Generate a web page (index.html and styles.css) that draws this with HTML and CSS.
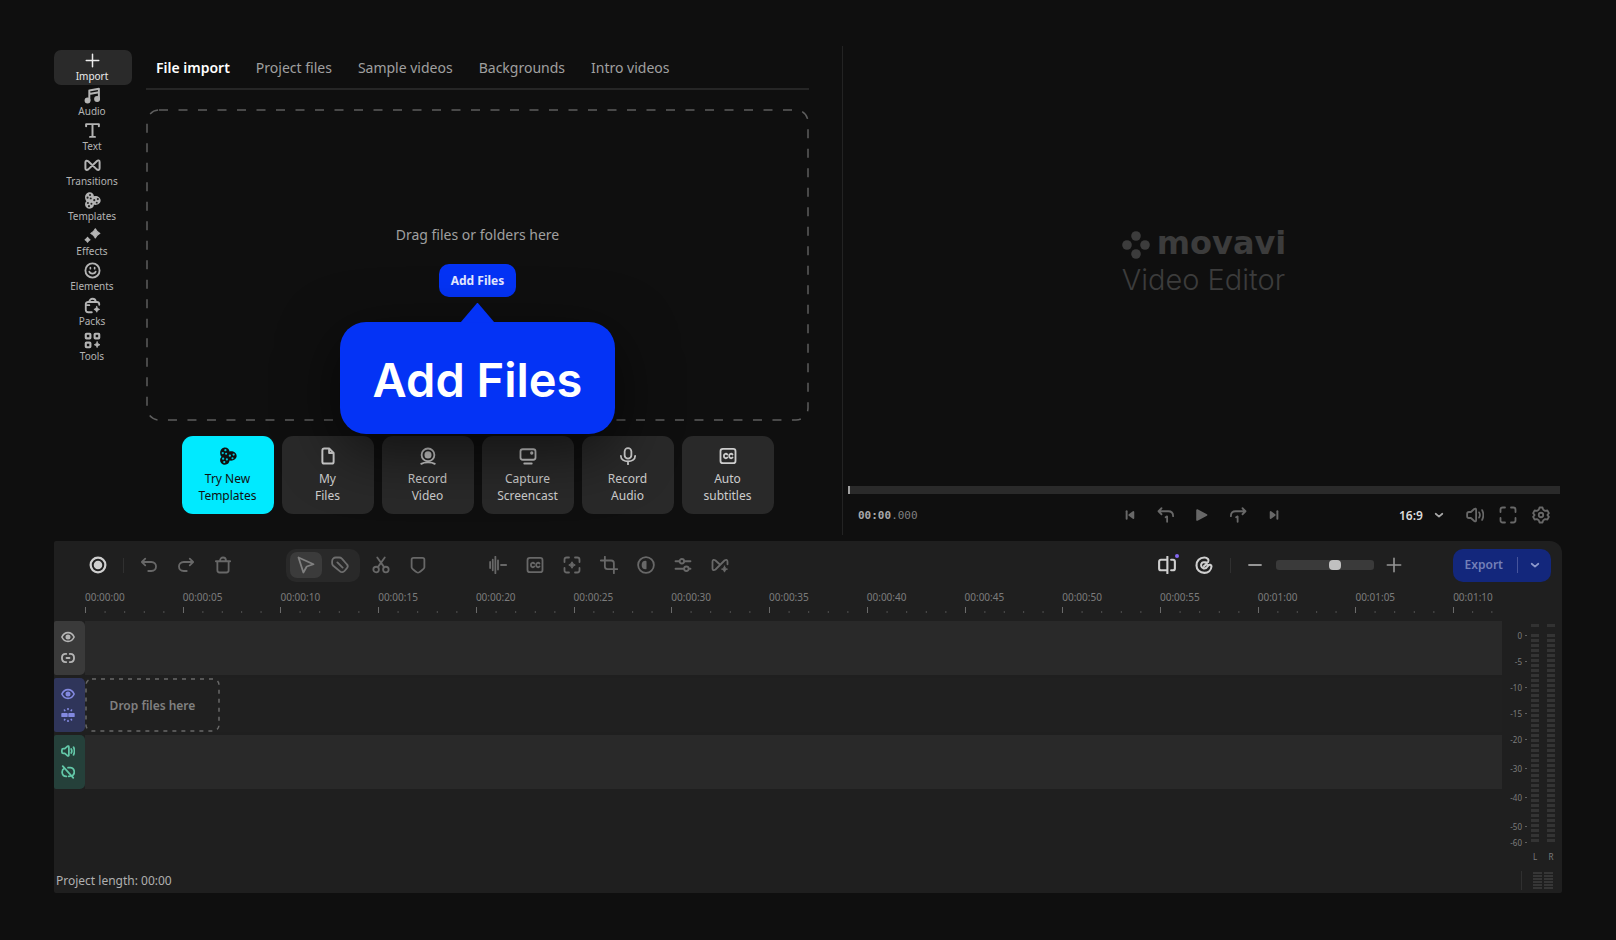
FILE: index.html
```html
<!DOCTYPE html>
<html lang="en">
<head>
<meta charset="utf-8">
<meta name="viewport" content="width=device-width, initial-scale=1">
<title>Movavi Video Editor</title>
<link rel="stylesheet" href="styles.css">
</head>
<body>
<svg class="sprite" aria-hidden="true">
  <symbol id="i-plus" viewBox="0 0 24 24"><path d="M12 2v20M2 12h20"/></symbol>
  <symbol id="i-minus" viewBox="0 0 24 24"><path d="M4 12h16"/></symbol>
  <symbol id="i-music" viewBox="0 0 24 24"><path d="M7.500 19V5L21 2.500V17M7.500 10L21 7.500" stroke-width="2.800"/><circle cx="5" cy="19" r="3" fill="currentColor"/><circle cx="18.500" cy="17" r="3" fill="currentColor"/></symbol>
  <symbol id="i-text" viewBox="0 0 24 24"><path d="M3 6V3h18v3M12 3v18M8.500 21h7" stroke-width="2.800"/></symbol>
  <symbol id="i-bow" viewBox="0 0 24 24"><path d="M2 7.500C2 5 4 4.500 6 6l12 11.500c2 1.500 4 1 4-1.500v-9c0-2.500-2-3-4-1L6 17.500c-2 1.500-4 1-4-1.500z" stroke-width="2.800"/></symbol>
  <symbol id="i-reel" viewBox="0 0 24 24"><path fill="currentColor" stroke="none" fill-rule="evenodd" d="M8 .500c3.500 0 6 2.500 6 5.500C19 5 23.500 8 23.500 12s-4.500 7-9.500 6c0 3-2.500 5.500-6 5.500S1.500 21 1.500 17.500c0-2 .800-3.500 2-4.500-1.200-1-2-3-2-5.500C1.500 3.500 4.500.500 8 .500z"/><g class="cut"><circle cx="8.500" cy="4.200" r="1.500"/><circle cx="5" cy="8" r="1.500"/><circle cx="9.500" cy="9" r="1.400"/><circle cx="19.500" cy="10" r="1.500"/><circle cx="14.500" cy="11.500" r="1.500"/><circle cx="18" cy="15" r="1.400"/><circle cx="5.500" cy="15.500" r="1.500"/><circle cx="10.500" cy="16.500" r="1.400"/><circle cx="7" cy="20" r="1.500"/></g></symbol>
  <symbol id="i-spark" viewBox="0 0 24 24"><path fill="currentColor" d="M16 2.500c1.500 3.500 2.500 4.500 6.500 6.500-4 2-5 3-6.500 6.500-1.500-3.500-2.500-4.500-6.500-6.500 4-2 5-3 6.500-6.500zM5 14.500c1 2 1.500 2.500 3.500 3.500-2 1-2.500 1.500-3.500 3.500-1-2-1.500-2.500-3.500-3.500 2-1 2.500-1.500 3.500-3.500z" stroke-width="1.500"/></symbol>
  <symbol id="i-smile" viewBox="0 0 24 24"><circle cx="12" cy="12" r="10" stroke-width="2.600"/><path d="M7.500 13.500c1 4 8 4 9 0M9 8v1.500M15 8v1.500" stroke-width="2.400"/></symbol>
  <symbol id="i-pack" viewBox="0 0 24 24"><path d="M11 21.500H6c-2 0-3.500-1-3.500-3V10c0-2 1.500-3 3.500-3h12c2 0 3.500 1 3.500 3v1M7.500 7c0-6 9-6 9 0M2.500 11.500h5" stroke-width="2.600"/><path fill="currentColor" d="M18 13.500c1 2.500 1.500 3 4 4-2.500 1-3 1.500-4 4-1-2.500-1.500-3-4-4 2.500-1 3-1.500 4-4z" stroke-width="1.200"/></symbol>
  <symbol id="i-tools" viewBox="0 0 24 24"><g stroke-width="3"><rect x="2.500" y="2.500" width="6.500" height="6.500" rx="1"/><rect x="15" y="2.500" width="6.500" height="6.500" rx="1"/><rect x="2.500" y="15" width="6.500" height="6.500" rx="1"/></g><path fill="currentColor" d="M18.500 14c1 2.500 1.500 3 4 4-2.500 1-3 1.500-4 4-1-2.500-1.500-3-4-4 2.500-1 3-1.500 4-4z" stroke-width="1.200"/></symbol>
  <symbol id="i-file" viewBox="0 0 24 24"><path d="M13.500 2H7C5.300 2 4.500 3 4.500 4.500v15C4.500 21 5.300 22 7 22h10c1.700 0 2.500-1 2.500-2.500V8zM13.500 2v6h6" stroke-width="2.600"/></symbol>
  <symbol id="i-webcam" viewBox="0 0 24 24"><circle cx="12" cy="10.500" r="8.500"/><circle cx="12" cy="10.500" r="3.500" fill="currentColor"/><path d="M3 22.500c4-2.500 14-2.500 18 0"/></symbol>
  <symbol id="i-screen" viewBox="0 0 24 24"><rect x="2" y="3" width="20" height="14" rx="3"/><path d="M7 22h10"/><circle cx="17" cy="8" r="1" fill="currentColor"/></symbol>
  <symbol id="i-mic" viewBox="0 0 24 24"><rect x="7.500" y="1.500" width="9" height="14" rx="4.500"/><path d="M2.500 12c0 9.500 19 9.500 19 0M12 19v4"/></symbol>
  <symbol id="i-cc" viewBox="0 0 24 24"><rect x="2" y="2.500" width="20" height="19" rx="3"/><path d="M11 10c-1-1.500-4.500-1.500-4.500 2s3.500 3.500 4.500 2M18 10c-1-1.500-4.500-1.500-4.500 2s3.500 3.500 4.500 2"/></symbol>
  <symbol id="i-prev" viewBox="0 0 24 24"><path d="M7.500 7v10" stroke-width="2.600"/><path fill="currentColor" d="M16.500 8v8L11 12z"/></symbol>
  <symbol id="i-next" viewBox="0 0 24 24"><path d="M16.500 7v10" stroke-width="2.600"/><path fill="currentColor" d="M7.500 8v8l5.500-4z"/></symbol>
  <symbol id="i-play" viewBox="0 0 24 24"><path fill="currentColor" d="M5.500 5.500v13L18 12z"/></symbol>
  <symbol id="i-back1" viewBox="0 0 24 24"><path d="M6 3L2 7l4 4M2.500 7H15c5 0 6.500 2.500 6.500 6.500M11.500 15l2-1.200V21"/></symbol>
  <symbol id="i-fwd1" viewBox="0 0 24 24"><path d="M18 3l4 4-4 4M21.500 7H9c-5 0-6.500 2.500-6.500 6.500M9.500 15l2-1.200V21"/></symbol>
  <symbol id="i-chev" viewBox="0 0 24 24"><path d="M4 9l8 7 8-7" stroke-width="4"/></symbol>
  <symbol id="i-vol" viewBox="0 0 24 24"><path d="M11 4L6.500 8H4c-1.500 0-2.500 1-2.500 2.500v3C1.500 15 2.500 16 4 16h2.500l4.500 4c1.500 1 2.500.500 2.500-1V5c0-1.500-1-2-2.500-1zM17.500 8.500c1.200 2 1.200 5 0 7M21.500 5.500c2 4 2 9 0 13"/></symbol>
  <symbol id="i-full" viewBox="0 0 24 24"><path d="M2 8V5c0-2 1-3 3-3h3M16 2h3c2 0 3 1 3 3v3M22 16v3c0 2-1 3-3 3h-3M8 22H5c-2 0-3-1-3-3v-3"/></symbol>
  <symbol id="i-gear" viewBox="0 0 24 24"><path d="M10 2h4l1 3 2.500 1.500 3-.500 2 3.500-2 2.500 2 2.500-2 3.500-3-.500L15 19l-1 3h-4l-1-3-2.500-1.500-3 .500-2-3.500 2-2.500-2-2.500 2-3.500 3 .500L9 5z"/><circle cx="12" cy="12" r="3"/></symbol>
  <symbol id="i-rec" viewBox="0 0 24 24"><circle cx="12" cy="12" r="9.800" stroke-width="3"/><circle cx="12" cy="12" r="4.500" fill="currentColor"/></symbol>
  <symbol id="i-undo" viewBox="0 0 24 24"><path d="M7 3.500L2.500 8 7 12.500M3 8h12c8.500 0 8.500 12 0 12h-4"/></symbol>
  <symbol id="i-redo" viewBox="0 0 24 24"><path d="M17 3.500L21.500 8 17 12.500M21 8H9C.500 8 .500 20 9 20h4"/></symbol>
  <symbol id="i-trash" viewBox="0 0 24 24"><path d="M2.500 7h19M4.500 7v12c0 2 1 3 3 3h9c2 0 3-1 3-3V7M8 6.500C8 .500 16 .500 16 6.500"/></symbol>
  <symbol id="i-cursor" viewBox="0 0 24 24"><path d="M2 2l6.500 20 4.500-8 9-3z"/></symbol>
  <symbol id="i-tag" viewBox="0 0 24 24"><path d="M6.500 2H11c1.500 0 2.500.500 3.500 1.500L21 11c1.500 1.500 1.500 4 0 5.500L18 20c-1.500 2-4.500 2-6 .500L3 13c-1-1-1.500-2-1.500-3.500V7c0-3 2-5 5-5zM8.500 8.500l7 7"/></symbol>
  <symbol id="i-cut" viewBox="0 0 24 24"><circle cx="5.500" cy="18" r="3.700"/><circle cx="18.500" cy="18" r="3.700"/><path d="M7.800 14.800L17 2M16.200 14.800L7 2"/></symbol>
  <symbol id="i-shield" viewBox="0 0 24 24"><path d="M6 2.500h12c1.500 0 2.500 1 2.500 2.500v10c0 2-4 4.500-6.500 6.500-1.500 1-2.500 1-4 0-2.500-2-6.500-4.500-6.500-6.500V5c0-1.500 1-2.500 2.500-2.500z"/></symbol>
  <symbol id="i-wave" viewBox="0 0 24 24"><path d="M1.500 8v8M5 5v14M8.500 1v22M12 6v12M16 12h7"/></symbol>
  <symbol id="i-focus" viewBox="0 0 24 24"><path d="M2 8V5c0-2 1-3 3-3h3M16 2h3c2 0 3 1 3 3v3M22 16v3c0 2-1 3-3 3h-3M8 22H5c-2 0-3-1-3-3v-3"/><path fill="currentColor" d="M12 8c1 2.800 1.200 3 4 4-2.800 1-3 1.200-4 4-1-2.800-1.200-3-4-4 2.800-1 3-1.200 4-4z" stroke-width="1.500"/></symbol>
  <symbol id="i-crop" viewBox="0 0 24 24"><path d="M6.500 1v13c0 2.500 1 3.500 3.500 3.500h13M1 6h14c2.500 0 3.500 1 3.500 3.500V23"/></symbol>
  <symbol id="i-contrast" viewBox="0 0 24 24"><circle cx="12" cy="12" r="10.500"/><path fill="currentColor" d="M11.500 7.500c-5.500 0-5.500 9 0 9z"/></symbol>
  <symbol id="i-adjust" viewBox="0 0 24 24"><path d="M2 7h5M14 7h8M2 17h11M20 17h2"/><circle cx="10.500" cy="7" r="3"/><circle cx="16.500" cy="17" r="3"/></symbol>
  <symbol id="i-bowplus" viewBox="0 0 24 24"><path d="M22 11V7.500C22 5 20 4.500 18 6L6 18c-2 1.500-4 1-4-1.500v-9C2 5 4 4.500 6 6l5.500 5"/><path fill="currentColor" d="M18 13.500c1 2.500 1.500 3 4 4-2.500 1-3 1.500-4 4-1-2.500-1.500-3-4-4 2.500-1 3-1.500 4-4z" stroke-width="1.200"/></symbol>
  <symbol id="i-split" viewBox="0 0 24 24"><path d="M8 5H4C2.500 5 1.500 6 1.500 7.500v9C1.500 18 2.500 19 4 19h4M12.500 1v22M8 5h4M8 19h4M17.500 5H20c1.500 0 2.500 1 2.500 2.500v9c0 1.500-1 2.500-2.500 2.500h-2.500" stroke-width="2.800"/></symbol>
  <symbol id="i-magnet" viewBox="0 0 24 24"><path d="M12.500 2C6 2 2 6.500 2 12.500S6.500 22.500 12.500 22.500c5 0 9-3.500 9.500-8.500.200-2.500-3-3-4.500-1-1.500 2.500-3.500 4-6 3.500-3.500-.700-4.500-5-2-7.500 2-2 6 1 8-1 2-2.500-1-6-5-6zM12 13.500l4-3" stroke-width="2.800"/></symbol>
  <symbol id="i-eye" viewBox="0 0 24 24"><path d="M1.500 12C6 2 18 2 22.500 12 18 22 6 22 1.500 12z" stroke-width="2.800"/><circle cx="12" cy="12" r="2.800" fill="currentColor"/></symbol>
  <symbol id="i-link" viewBox="0 0 24 24"><path d="M9 5H8c-8.500 0-8.500 14 0 14h1M15 5h1c8.500 0 8.500 14 0 14h-1M9.500 12h5" stroke-width="3.200"/></symbol>
  <symbol id="i-unlink" viewBox="0 0 24 24"><path d="M6 5.500c-6 3-5.500 14 3 14M12 4.500h4c7 0 8.500 9 4.500 13M3 2l18 20M13 19.500l2.500-.500" stroke-width="3"/></symbol>
  <symbol id="i-burst" viewBox="0 0 24 24"><path fill="currentColor" d="M2 10h8v4H2zM14 10h8v4h-8z"/><path d="M12 1v1.500M12 21.500V23M6 3.500l.5 1M18 3.500l-.5 1M6 20.500l.5-1M18 20.500l-.5-1" stroke-width="2.800"/></symbol>
</svg>

<main class="app">
  <section class="workspace">
    <div class="project">
      <nav class="sidebar" aria-label="Sections">
        <button class="side-item is-active"><svg class="icon"><use href="#i-plus"/></svg>Import</button>
        <button class="side-item"><svg class="icon"><use href="#i-music"/></svg>Audio</button>
        <button class="side-item"><svg class="icon"><use href="#i-text"/></svg>Text</button>
        <button class="side-item"><svg class="icon"><use href="#i-bow"/></svg>Transitions</button>
        <button class="side-item"><svg class="icon"><use href="#i-reel"/></svg>Templates</button>
        <button class="side-item"><svg class="icon"><use href="#i-spark"/></svg>Effects</button>
        <button class="side-item"><svg class="icon"><use href="#i-smile"/></svg>Elements</button>
        <button class="side-item"><svg class="icon"><use href="#i-pack"/></svg>Packs</button>
        <button class="side-item"><svg class="icon"><use href="#i-tools"/></svg>Tools</button>
      </nav>
      <div class="import">
        <div class="tabs">
          <button class="tab is-active">File import</button>
          <button class="tab">Project files</button>
          <button class="tab">Sample videos</button>
          <button class="tab">Backgrounds</button>
          <button class="tab">Intro videos</button>
        </div>
        <div class="dropzone">
          <svg class="outline" aria-hidden="true"><rect class="outline-rect" x="1" y="1" rx="12"/></svg>
          <p class="drop-text">Drag files or folders here</p>
          <div class="add-wrap">
            <button class="add-button">Add Files</button>
            <div class="callout" role="tooltip">Add Files</div>
          </div>
        </div>
        <div class="cards">
          <button class="card is-new"><svg class="icon"><use href="#i-reel"/></svg>Try New<br>Templates</button>
          <button class="card"><svg class="icon"><use href="#i-file"/></svg>My<br>Files</button>
          <button class="card"><svg class="icon"><use href="#i-webcam"/></svg>Record<br>Video</button>
          <button class="card"><svg class="icon"><use href="#i-screen"/></svg>Capture<br>Screencast</button>
          <button class="card"><svg class="icon"><use href="#i-mic"/></svg>Record<br>Audio</button>
          <button class="card"><svg class="icon"><use href="#i-cc"/></svg>Auto<br>subtitles</button>
        </div>
      </div>
    </div>

    <div class="preview">
      <div class="stage">
        <div class="brand">
          <div class="brand-row">
            <svg class="brand-mark" viewBox="0 0 28 28" aria-hidden="true"><circle cx="14" cy="5" r="4.800"/><circle cx="5" cy="14" r="4.800"/><circle cx="23" cy="14" r="4.800"/><circle cx="14" cy="23" r="4.800"/></svg>
            <span class="brand-name">movavi</span>
          </div>
          <div class="brand-product">Video Editor</div>
        </div>
      </div>
      <div class="scrub"><span class="scrub-head"></span></div>
      <div class="player">
        <div class="time">00:00<span class="time-ms">.000</span></div>
        <div class="transport">
          <button class="tool" aria-label="Previous"><svg class="icon"><use href="#i-prev"/></svg></button>
          <button class="tool" aria-label="Frame back"><svg class="icon"><use href="#i-back1"/></svg></button>
          <button class="tool" aria-label="Play"><svg class="icon"><use href="#i-play"/></svg></button>
          <button class="tool" aria-label="Frame forward"><svg class="icon"><use href="#i-fwd1"/></svg></button>
          <button class="tool" aria-label="Next"><svg class="icon"><use href="#i-next"/></svg></button>
        </div>
        <div class="view-tools">
          <label class="ratio"><select class="ratio-select" aria-label="Aspect ratio"><option>16:9</option></select><svg class="icon icon-xs"><use href="#i-chev"/></svg></label>
          <button class="tool tool-view" aria-label="Volume"><svg class="icon"><use href="#i-vol"/></svg></button>
          <button class="tool tool-view" aria-label="Full screen"><svg class="icon"><use href="#i-full"/></svg></button>
          <button class="tool tool-view" aria-label="Settings"><svg class="icon"><use href="#i-gear"/></svg></button>
        </div>
      </div>
    </div>
  </section>

  <section class="timeline">
    <div class="toolbar">
      <button class="tool is-bright" aria-label="Record"><svg class="icon"><use href="#i-rec"/></svg></button>
      <span class="sep"></span>
      <button class="tool" aria-label="Undo"><svg class="icon"><use href="#i-undo"/></svg></button>
      <button class="tool" aria-label="Redo"><svg class="icon"><use href="#i-redo"/></svg></button>
      <button class="tool" aria-label="Delete"><svg class="icon"><use href="#i-trash"/></svg></button>
      <div class="mode">
        <button class="mode-button is-active" aria-label="Select"><svg class="icon"><use href="#i-cursor"/></svg></button>
        <button class="mode-button" aria-label="Slip"><svg class="icon"><use href="#i-tag"/></svg></button>
      </div>
      <button class="tool" aria-label="Split"><svg class="icon"><use href="#i-cut"/></svg></button>
      <button class="tool" aria-label="Marker"><svg class="icon"><use href="#i-shield"/></svg></button>
      <div class="clip-tools">
        <button class="tool" aria-label="Silence removal"><svg class="icon"><use href="#i-wave"/></svg></button>
        <button class="tool" aria-label="Subtitles"><svg class="icon"><use href="#i-cc"/></svg></button>
        <button class="tool" aria-label="Motion tracking"><svg class="icon"><use href="#i-focus"/></svg></button>
        <button class="tool" aria-label="Crop"><svg class="icon"><use href="#i-crop"/></svg></button>
        <button class="tool" aria-label="Color"><svg class="icon"><use href="#i-contrast"/></svg></button>
        <button class="tool" aria-label="Adjust"><svg class="icon"><use href="#i-adjust"/></svg></button>
        <button class="tool" aria-label="Transition wizard"><svg class="icon"><use href="#i-bowplus"/></svg></button>
      </div>
      <div class="zoom-tools">
        <button class="tool is-bright has-dot" aria-label="Auto split"><svg class="icon"><use href="#i-split"/></svg></button>
        <button class="tool is-bright" aria-label="Snap"><svg class="icon"><use href="#i-magnet"/></svg></button>
        <span class="sep"></span>
        <button class="tool is-mid" aria-label="Zoom out"><svg class="icon"><use href="#i-minus"/></svg></button>
        <input class="zoom" type="range" min="0" max="100" value="62" aria-label="Timeline scale">
        <button class="tool is-mid" aria-label="Zoom in"><svg class="icon icon-sm"><use href="#i-plus"/></svg></button>
      </div>
      <div class="export">
        <button class="export-main">Export</button>
        <button class="export-more" aria-label="Export options"><svg class="icon icon-xs"><use href="#i-chev"/></svg></button>
      </div>
    </div>

    <div class="timeline-body">
      <div class="lanes">
        <div class="ruler">
          <span class="mark">00:00:00</span><span class="mark">00:00:05</span><span class="mark">00:00:10</span><span class="mark">00:00:15</span><span class="mark">00:00:20</span><span class="mark">00:00:25</span><span class="mark">00:00:30</span><span class="mark">00:00:35</span><span class="mark">00:00:40</span><span class="mark">00:00:45</span><span class="mark">00:00:50</span><span class="mark">00:00:55</span><span class="mark">00:01:00</span><span class="mark">00:01:05</span><span class="mark mark-half">00:01:10</span>
        </div>
        <div class="track">
          <div class="track-head">
            <button class="track-button" aria-label="Show overlay track"><svg class="icon icon-track"><use href="#i-eye"/></svg></button>
            <button class="track-button" aria-label="Link overlay track"><svg class="icon icon-track"><use href="#i-link"/></svg></button>
          </div>
          <div class="lane"></div>
        </div>
        <div class="track track-video">
          <div class="track-head">
            <button class="track-button" aria-label="Show video track"><svg class="icon icon-track"><use href="#i-eye"/></svg></button>
            <button class="track-button" aria-label="Magnetic video track"><svg class="icon icon-track"><use href="#i-burst"/></svg></button>
          </div>
          <div class="lane">
            <div class="drop-clip"><svg class="outline" aria-hidden="true"><rect class="outline-rect" x="1" y="1" rx="6"/></svg>Drop files here</div>
          </div>
        </div>
        <div class="track track-audio">
          <div class="track-head">
            <button class="track-button" aria-label="Mute audio track"><svg class="icon icon-track"><use href="#i-vol"/></svg></button>
            <button class="track-button" aria-label="Unlink audio track"><svg class="icon icon-track"><use href="#i-unlink"/></svg></button>
          </div>
          <div class="lane"></div>
        </div>
        <p class="status">Project length: 00:00</p>
      </div>
      <div class="meter">
        <div class="meter-main">
          <ul class="scale">
            <li class="level">0</li><li class="level">-5</li><li class="level">-10</li><li class="level">-15</li>
            <li class="level level-wide">-20</li><li class="level level-wide">-30</li><li class="level level-wide">-40</li>
            <li class="level level-short">-50</li><li class="level level-short">-60</li>
          </ul>
          <div class="channel"><span class="peak"></span><span class="bar"></span><span class="channel-name">L</span></div>
          <div class="channel"><span class="peak"></span><span class="bar"></span><span class="channel-name">R</span></div>
        </div>
        <div class="meter-foot"><span class="sep"></span><button class="meter-toggle" aria-label="Toggle meter"></button></div>
      </div>
    </div>
  </section>
</main>
</body>
</html>
```
FILE: styles.css
```css
* { box-sizing: border-box; }

body {
  margin: 0;
  background: #0f0f0f;
  color: #b0b0b0;
  font-family: "Noto Sans", "Open Sans", sans-serif;
  font-size: 12px;
}

button, select, input { font: inherit; color: inherit; margin: 0; }
button { padding: 0; border: 0; background: none; cursor: pointer; }
p, ul { margin: 0; padding: 0; }

.sprite { position: absolute; width: 0; height: 0; }

.icon {
  display: block;
  width: 18px;
  height: 18px;
  flex: none;
  fill: none;
  stroke: currentColor;
  stroke-width: 2.4;
  stroke-linecap: round;
  stroke-linejoin: round;
}
.icon-sm { width: 16px; height: 16px; }
.icon-xs { width: 10px; height: 10px; }
.icon-track { width: 14px; height: 14px; stroke-width: 3; }
.cut { fill: var(--hole, #222); stroke: none; }

.app {
  display: flex;
  flex-direction: column;
  min-height: 100vh;
  padding: 46px 54px 47px;
}

/* Workspace */
.workspace { display: grid; grid-template-columns: 788fr 720fr; }

.project {
  display: grid;
  grid-template-columns: 78px minmax(0, 1fr);
  column-gap: 14px;
  padding: 0 33px 27px 0;
}

.sidebar { display: flex; flex-direction: column; padding-top: 4px; }
.side-item {
  display: flex;
  flex-direction: column;
  align-items: center;
  height: 35px;
  padding: 2px 2px 0 0;
  border-radius: 7px;
  font-size: 10px;
  line-height: 12px;
  color: #b4b4b4;
}
.side-item.is-active { background: #2a2a2a; color: #ececec; }
.side-item .icon { width: 17px; height: 17px; margin-bottom: 1px; }
.side-item.is-active .icon { padding: 1px; }

.tabs {
  display: flex;
  gap: 26px;
  height: 44px;
  padding: 1px 10px 0;
  border-bottom: 2px solid #262626;
}
.tab { font-size: 14px; line-height: 20px; color: #a0a0a0; }
.tab.is-active { color: #fff; font-weight: 600; }

.dropzone {
  position: relative;
  display: flex;
  flex-direction: column;
  align-items: center;
  justify-content: center;
  gap: 19px;
  height: 312px;
  margin-top: 19px;
  padding-bottom: 9px;
}
.outline { position: absolute; inset: 0; width: 100%; height: 100%; pointer-events: none; }
.outline-rect {
  width: calc(100% - 2px);
  height: calc(100% - 2px);
  fill: none;
  stroke: #5e5e5e;
  stroke-width: 1.5px;
  stroke-dasharray: 9 10.500;
}
.drop-text { font-size: 14px; line-height: 20px; color: #a0a0a0; }
.add-wrap { position: relative; display: flex; justify-content: center; }
.add-button {
  height: 33px;
  padding: 0 12px;
  border-radius: 10px;
  background: #0433f5;
  color: #e4e8ff;
  font-size: 12px;
  font-weight: 700;
}
.callout {
  position: absolute;
  z-index: 2;
  top: 58px;
  padding: 28px 33px 24px;
  border-radius: 26px;
  background: #0433f5;
  box-shadow: 0 16px 60px rgba(0, 0, 0, 0.6);
  color: #fff;
  font-family: Inter, sans-serif;
  font-size: 47px;
  font-weight: 600;
  line-height: 60px;
  white-space: nowrap;
}
.callout::before {
  content: "";
  position: absolute;
  top: -19px;
  left: calc(50% - 17px);
  width: 34px;
  height: 20px;
  background: #0433f5;
  clip-path: polygon(50% 0, 100% 100%, 0 100%);
}

.cards { display: flex; justify-content: center; gap: 8px; margin-top: 15px; }
.card {
  display: flex;
  flex-direction: column;
  align-items: center;
  width: 92px;
  height: 78px;
  padding-top: 11px;
  border-radius: 11px;
  background: #292929;
  color: #cdcdcd;
  line-height: 17px;
}
.card .icon { margin-bottom: 5px; }
.card.is-new { background: #00eaff; color: #101010; }
.card.is-new .icon { --hole: #00c8da; }

/* Preview */
.preview {
  display: flex;
  flex-direction: column;
  margin-bottom: 6px;
  padding: 0 2px 0 5px;
  border-left: 1px solid #232323;
}
.stage {
  flex: 1;
  display: flex;
  align-items: center;
  justify-content: center;
  padding-bottom: 4px;
  color: #3c3c3c;
}
.brand-row { display: flex; align-items: center; gap: 7px; height: 32px; }
.brand-mark { width: 28px; height: 28px; fill: currentColor; }
.brand-name { font-family: "DejaVu Sans", sans-serif; font-size: 32px; font-weight: 700; line-height: 28px; padding-bottom: 4px; }
.brand-product { font-family: Inter, sans-serif; font-size: 29px; font-weight: 300; line-height: 38px; }
.scrub { height: 8px; background: #2a2a2a; }
.scrub-head { display: block; width: 2px; height: 8px; background: #a0a0a0; }
.player {
  display: grid;
  grid-template-columns: 1fr auto 1fr;
  align-items: center;
  height: 41px;
  padding: 1px 3px 0 10px;
  color: #6a6a6a;
}
.time { font-family: "DejaVu Sans Mono", monospace; font-size: 11px; font-weight: 700; color: #a8a8a8; }
.time-ms { font-weight: 400; color: #808080; }
.transport { display: flex; margin-right: 11px; }
.transport .tool { width: 36px; }
.view-tools { display: flex; align-items: center; justify-content: flex-end; }
.ratio { display: flex; align-items: center; margin-right: 14px; color: #a8a8a8; }
.ratio-select {
  width: 35px;
  padding: 0;
  border: 0;
  appearance: none;
  background: transparent;
  color: #dcdcdc;
  font-size: 12px;
  font-weight: 600;
}
.tool {
  display: flex;
  align-items: center;
  justify-content: center;
  width: 37px;
  height: 32px;
  color: #686868;
}
.tool-view { width: 33px; }
.is-bright { color: #cfcfcf; }
.is-mid { color: #969696; }

/* Timeline */
.timeline {
  flex: 1;
  display: flex;
  flex-direction: column;
  border-radius: 2px 12px 2px 2px;
  background: #1f1f1f;
}
.toolbar { display: flex; align-items: center; height: 48px; padding: 0 11px 0 25px; }
.sep { width: 1px; height: 15px; margin: 0 6px 0 7px; background: #303030; }
.mode {
  display: flex;
  align-items: center;
  gap: 2px;
  height: 33px;
  margin: 0 2px 0 45px;
  padding: 0 4px;
  border-radius: 10px;
  background: #292929;
}
.mode-button {
  display: flex;
  align-items: center;
  justify-content: center;
  width: 32px;
  height: 26px;
  border-radius: 7px;
  color: #6e6e6e;
}
.mode-button.is-active { background: #3b3b3b; color: #808080; }
.clip-tools { display: flex; margin-left: 43px; }
.zoom-tools { display: flex; align-items: center; margin-left: auto; }
.has-dot { position: relative; }
.has-dot::after {
  content: "";
  position: absolute;
  top: 5px;
  right: 7px;
  width: 4px;
  height: 4px;
  border-radius: 50%;
  background: #8468f0;
}
.zoom {
  width: 98px;
  height: 10px;
  margin: 0 2px;
  appearance: none;
  border-radius: 3px;
  background: #3a3a3a;
}
.zoom::-webkit-slider-thumb {
  appearance: none;
  width: 12px;
  height: 10px;
  border-radius: 4px;
  background: #c0c0c0;
}
.export {
  display: flex;
  align-items: center;
  height: 33px;
  margin-left: 40px;
  border-radius: 10px;
  background: #13277c;
  color: #7480b8;
}
.export-main { padding: 0 14px 0 12px; border-right: 1px solid #46549c; line-height: 16px; font-weight: 600; }
.export-more { display: flex; justify-content: center; width: 33px; color: #8c98cc; }

.timeline-body { flex: 1; display: grid; grid-template-columns: minmax(0, 1fr) 60px; }
.lanes { display: flex; flex-direction: column; gap: 3px; }
.ruler {
  display: grid;
  grid-template-columns: repeat(14, 2fr) 1fr;
  height: 29px;
  margin-left: 31px;
}
.mark {
  height: 24px;
  padding-top: 2px;
  overflow: visible;
  font-size: 10px;
  line-height: 12px;
  white-space: nowrap;
  color: #7c7c7c;
  background-image: linear-gradient(#6a6a6a, #6a6a6a), linear-gradient(to right, #505050 1px, transparent 1px);
  background-position: left 18px, left 22px;
  background-size: 1px 6px, 20% 2px;
  background-repeat: no-repeat, repeat-x;
}
.mark-half { width: 48px; background-size: 1px 6px, 40% 2px; }

.track { display: flex; height: 54px; color: #b4b4b4; }
.track-head {
  display: flex;
  flex-direction: column;
  justify-content: center;
  gap: 7px;
  width: 31px;
  padding: 0 0 1px 7px;
  border-radius: 2px 5px 5px 2px;
  background: #3a3a3a;
}
.track-button { width: 14px; height: 14px; }
.lane { flex: 1; background: #292929; }
.track-video { color: #8389e0; }
.track-video .track-head { background: #2f355a; }
.track-video .lane { background: #202020; }
.track-audio { color: #63c8a8; }
.track-audio .track-head { background: #25403a; }
.drop-clip {
  position: relative;
  display: flex;
  align-items: center;
  justify-content: center;
  width: 135px;
  height: 54px;
  font-weight: 600;
  color: #808080;
}
.drop-clip .outline-rect { stroke: #686868; stroke-dasharray: 4 5; }
.status { margin-top: auto; padding: 0 2px 4px; line-height: 16px; color: #b0b0b0; }

.meter { display: flex; flex-direction: column; justify-content: space-between; padding: 35px 7px 3px 0; }
.meter-main { display: flex; justify-content: flex-end; gap: 8px; }
.scale { flex: 1; list-style: none; padding-top: 7px; font-size: 8px; line-height: 10px; text-align: right; color: #7c7c7c; }
.level { height: 26px; margin-right: -4px; }
.level::after { content: ""; display: inline-block; width: 2px; height: 1px; margin: 0 0 3px 3px; background: #606060; }
.level-wide { height: 29px; }
.level-short { height: 16px; }
.channel { display: flex; flex-direction: column; align-items: center; width: 8px; }
.peak { width: 8px; height: 3px; margin-bottom: 7px; background: #323232; }
.bar { width: 8px; height: 208px; background: repeating-linear-gradient(#343434 0 3px, transparent 3px 5px); }
.channel-name { margin-top: 10px; font-size: 8px; line-height: 10px; color: #7c7c7c; }
.meter-foot { display: flex; align-items: center; justify-content: flex-end; }
.meter-foot .sep { height: 19px; margin: 0 11px 0 0; }
.meter-toggle {
  width: 20px;
  height: 18px;
  margin-right: 2px;
  background:
    linear-gradient(to right, transparent 9px, #1f1f1f 9px 11px, transparent 11px),
    repeating-linear-gradient(#363636 0 2px, #1f1f1f 2px 3px);
}
```
